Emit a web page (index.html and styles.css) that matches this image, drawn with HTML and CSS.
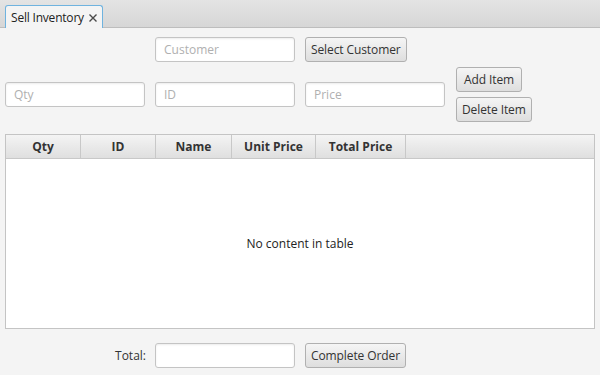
FILE: index.html
```html
<!DOCTYPE html>
<html lang="en">
<head>
    <meta charset="UTF-8">
    <title>Sell Inventory</title>
    <link rel="stylesheet" href="styles.css">
</head>
<body>
    <div class="tab-bar">
        <div class="tab">
            <span class="tab-title">Sell Inventory</span>
            <svg class="tab-close" width="8" height="8" viewBox="0 0 8 8">
                <path d="M0.5 0.5 L7.5 7.5 M7.5 0.5 L0.5 7.5" stroke="#4a4a4a" stroke-width="1.4" fill="none"/>
            </svg>
        </div>
    </div>

    <div class="content">
        <div class="form">
            <input type="text" class="field col-2" placeholder="Customer">
            <button class="btn col-3">Select Customer</button>
        </div>

        <div class="form item-row">
            <input type="text" class="field" placeholder="Qty">
            <input type="text" class="field" placeholder="ID">
            <input type="text" class="field" placeholder="Price">
            <div class="item-buttons">
                <button class="btn add-btn">Add Item</button>
                <button class="btn">Delete Item</button>
            </div>
        </div>

        <div class="table">
            <div class="table-header">
                <div class="th qty">Qty</div>
                <div class="th id">ID</div>
                <div class="th name">Name</div>
                <div class="th unit">Unit Price</div>
                <div class="th total">Total Price</div>
                <div class="th filler"></div>
            </div>
            <div class="table-body">No content in table</div>
        </div>

        <div class="form footer">
            <label class="total-label">Total:</label>
            <input type="text" class="field">
            <button class="btn">Complete Order</button>
        </div>
    </div>
</body>
</html>
```

FILE: styles.css
```css
body {
    margin: 0;
    padding: 0;
    width: 600px;
    height: 375px;
    overflow: hidden;
    background-color: #f4f4f4;
    font-family: "Open Sans", "Noto Sans", sans-serif;
    font-size: 12px;
    color: #333;
}

.tab-bar {
    height: 28px;
    background: linear-gradient(#e4e4e4, #d6d6d6);
    border-bottom: 1px solid #bdbdbd;
    padding-left: 5px;
    display: flex;
    align-items: flex-end;
    box-sizing: border-box;
}
.tab {
    height: 23px;
    width: 98px;
    box-sizing: border-box;
    margin-bottom: -1px;
    background-color: #f4f4f4;
    border: 1px solid #6fb3df;
    border-bottom: none;
    border-radius: 3px 3px 0 0;
    display: flex;
    align-items: center;
    padding-left: 5px;
    color: #222;
}
.tab-title {
    letter-spacing: -0.2px;
}
.tab-close {
    margin-left: 5px;
    margin-top: 1px;
}

.content {
    padding: 9px 5px 0 5px;
}

.form {
    display: grid;
    grid-template-columns: 140px 140px 140px auto;
    column-gap: 10px;
    align-items: center;
}
.col-2 {
    grid-column: 2;
}
.col-3 {
    grid-column: 3;
    justify-self: start;
}

.item-row {
    margin-top: 5px;
}
.item-buttons {
    display: flex;
    flex-direction: column;
    align-items: flex-start;
    gap: 5px;
    padding-left: 1px;
}

.field {
    height: 25px;
    box-sizing: border-box;
    border: 1px solid #c4c4c4;
    border-radius: 3px;
    background-color: #fff;
    box-shadow: inset 0 1px 2px rgba(0, 0, 0, 0.08);
    padding: 0 8px;
    font-family: inherit;
    font-size: 12px;
    color: #333;
    outline: none;
}
.field::placeholder {
    color: #b0b0b0;
}

.btn {
    height: 25px;
    box-sizing: border-box;
    border: 1px solid #b0b0b0;
    border-radius: 3px;
    background: linear-gradient(#f5f5f5, #dedede);
    padding: 0 5px;
    font-family: inherit;
    font-size: 12px;
    letter-spacing: -0.1px;
    color: #333;
    cursor: pointer;
}
.btn:hover {
    background: linear-gradient(#fafafa, #e6e6e6);
}
.add-btn {
    padding: 0 7px;
}

.table {
    margin-top: 12px;
    height: 195px;
    box-sizing: border-box;
    border: 1px solid #c4c4c4;
    background-color: #fff;
    display: flex;
    flex-direction: column;
}
.table-header {
    display: flex;
    height: 24px;
    box-sizing: border-box;
    background: linear-gradient(#f4f4f4, #dfdfdf);
    border-bottom: 1px solid #c8c8c8;
}
.th {
    box-sizing: border-box;
    border-right: 1px solid #c8c8c8;
    display: flex;
    align-items: center;
    justify-content: center;
    font-weight: bold;
    font-size: 12px;
    color: #333;
}
.qty { width: 75px; }
.id { width: 75px; }
.name { width: 76px; }
.unit { width: 84px; }
.total { width: 90px; }
.filler {
    flex: 1;
    border-right: none;
}
.table-body {
    flex: 1;
    display: flex;
    align-items: center;
    justify-content: center;
    color: #222;
}

.footer {
    margin-top: 14px;
}
.total-label {
    justify-self: end;
    margin-right: -1px;
}
.footer .btn {
    justify-self: start;
}
```
